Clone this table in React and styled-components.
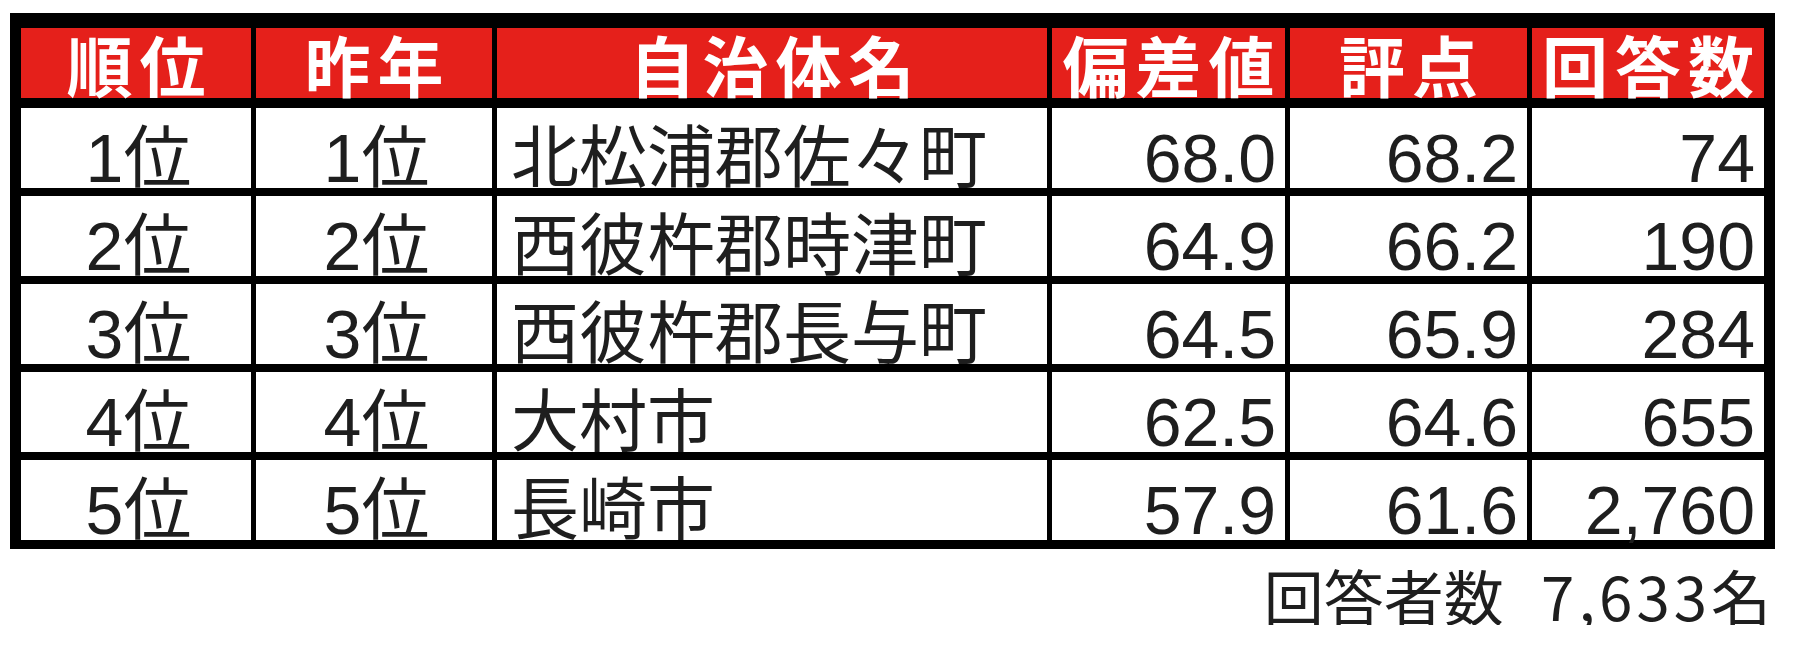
import React from 'react';
import styled, { createGlobalStyle } from 'styled-components';

const GlobalStyle = createGlobalStyle`
    body {
        margin: 0;
        background: #fff;
    }
`;

const columns = ['順位', '昨年', '自治体名', '偏差値', '評点', '回答数'];

const rows = [
    ['1位', '1位', '北松浦郡佐々町', '68.0', '68.2', '74'],
    ['2位', '2位', '西彼杵郡時津町', '64.9', '66.2', '190'],
    ['3位', '3位', '西彼杵郡長与町', '64.5', '65.9', '284'],
    ['4位', '4位', '大村市', '62.5', '64.6', '655'],
    ['5位', '5位', '長崎市', '57.9', '61.6', '2,760'],
];

const aligns = ['center', 'center', 'left', 'right', 'right', 'right'];

function App(){
    return (
        <Page>
            <GlobalStyle />
            <Table>
                <HeaderRow>
                    {columns.map((c) => <HeadCell key={c}>{c}</HeadCell>)}
                </HeaderRow>
                {rows.map((r) => (
                    <Row key={r[2]}>
                        {r.map((v, i) => <Cell key={i} $align={aligns[i]}>{v}</Cell>)}
                    </Row>
                ))}
            </Table>
            <Footer>回答者数 <Count>7,633</Count>名</Footer>
        </Page>
    )
}

const Page = styled.div`
    width: 1765px;
    padding: 13px 0 0 10px;
`;

const Table = styled.div`
    display: flex;
    flex-direction: column;
    gap: 8px;
    box-sizing: border-box;
    width: 1765px;
    padding: 15px 11px 9px 11px;
    background: #000;
`;

const Row = styled.div`
    display: grid;
    grid-template-columns: 230px 236px 550px 233px 237px 232px;
    column-gap: 5px;
`;

const HeaderRow = styled(Row)`
    margin-bottom: 2px;
`;

const HeadCell = styled.div`
    box-sizing: border-box;
    height: 70px;
    background: #e5201b;
    color: #fff;
    font-family: "Noto Sans CJK JP", sans-serif;
    font-weight: 700;
    font-size: 66px;
    line-height: 70px;
    letter-spacing: 7px;
    padding-left: 7px;
    text-align: center;
    white-space: nowrap;
`;

const Cell = styled.div`
    box-sizing: border-box;
    height: 80px;
    background: #fff;
    color: #1e1e1e;
    font-family: "Liberation Sans", "Noto Sans CJK JP", sans-serif;
    font-size: 68px;
    line-height: 68px;
    padding: 16px 9px 0 14px;
    text-align: ${(p) => p.$align};
    white-space: nowrap;
`;

const Footer = styled.div`
    margin-top: 16px;
    padding-right: 4px;
    text-align: right;
    color: #1e1e1e;
    font-family: "Noto Sans CJK JP", sans-serif;
    font-size: 60px;
    line-height: 60px;
    word-spacing: 24px;
    white-space: nowrap;
`;

const Count = styled.span`
    letter-spacing: 4px;
`;

export default App;
